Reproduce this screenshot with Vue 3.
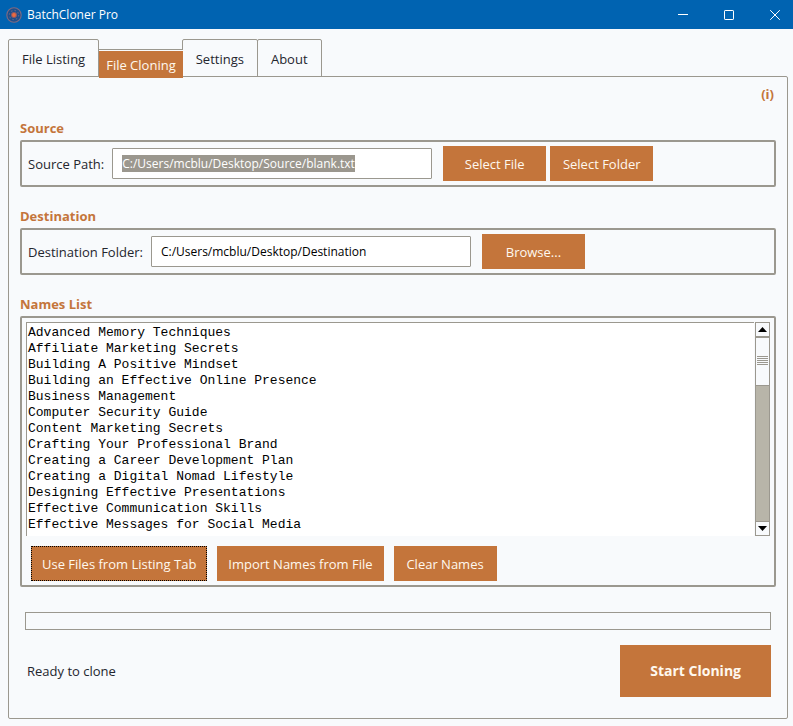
<script setup>
import { ref, onMounted } from 'vue'

const tabs = ['File Listing', 'File Cloning', 'Settings', 'About']
const activeTab = ref('File Cloning')

const sourcePath = ref('C:/Users/mcblu/Desktop/Source/blank.txt')
const destinationPath = ref('C:/Users/mcblu/Desktop/Destination')
const names = ref([
  'Advanced Memory Techniques',
  'Affiliate Marketing Secrets',
  'Building A Positive Mindset',
  'Building an Effective Online Presence',
  'Business Management',
  'Computer Security Guide',
  'Content Marketing Secrets',
  'Crafting Your Professional Brand',
  'Creating a Career Development Plan',
  'Creating a Digital Nomad Lifestyle',
  'Designing Effective Presentations',
  'Effective Communication Skills',
  'Effective Messages for Social Media',
].join('\n'))

const sourceInput = ref(null)
const namesBox = ref(null)

function scrollNames(step) {
  namesBox.value.scrollTop += step
}

onMounted(() => {
  sourceInput.value.focus()
  sourceInput.value.select()
})
</script>

<template>
  <div class="window">
    <header class="titlebar">
      <svg class="logo" viewBox="0 0 16 16" aria-hidden="true">
        <circle cx="8" cy="8" r="7.2" fill="#1d4f8c" stroke="#806a80" stroke-width="1.1" />
        <circle cx="8" cy="8" r="4.6" fill="none" stroke="#5d6288" stroke-width="1.2" stroke-dasharray="1.6 2" />
        <circle cx="8" cy="8" r="3" fill="#8c5a68" />
        <circle cx="8" cy="8" r="1.9" fill="#ee6a3e" />
      </svg>
      <h1 class="title">BatchCloner Pro</h1>
      <button class="winbtn" type="button" aria-label="Minimize">
        <svg viewBox="0 0 10 10"><path d="M0 4.5H10" /></svg>
      </button>
      <button class="winbtn" type="button" aria-label="Maximize">
        <svg viewBox="0 0 10 10"><rect x="0.5" y="0.5" width="9" height="9" rx="0.6" /></svg>
      </button>
      <button class="winbtn" type="button" aria-label="Close">
        <svg viewBox="0 0 10 10"><path d="M0.2 0.2L9.8 9.8M9.8 0.2L0.2 9.8" /></svg>
      </button>
    </header>

    <main class="client">
      <div class="tabs" role="tablist">
        <button
          v-for="tab in tabs"
          :key="tab"
          type="button"
          role="tab"
          class="tab"
          :class="{ active: tab === activeTab }"
          :aria-selected="tab === activeTab"
          @click="activeTab = tab"
        >{{ tab }}</button>
      </div>

      <section class="panel">
        <div class="help"><button class="info" type="button">(i)</button></div>

        <section class="group">
          <h2 class="heading">Source</h2>
          <div class="box row">
            <label for="source">Source Path:</label>
            <input id="source" ref="sourceInput" v-model="sourcePath" type="text" class="field" spellcheck="false" />
            <div class="pair">
              <button class="btn" type="button">Select File</button>
              <button class="btn" type="button">Select Folder</button>
            </div>
          </div>
        </section>

        <section class="group">
          <h2 class="heading">Destination</h2>
          <div class="box row">
            <label for="destination">Destination Folder:</label>
            <input id="destination" v-model="destinationPath" type="text" class="field" spellcheck="false" />
            <button class="btn" type="button">Browse...</button>
          </div>
        </section>

        <section class="group grow">
          <h2 id="names-heading" class="heading">Names List</h2>
          <div class="box names">
            <div class="list">
              <textarea ref="namesBox" v-model="names" class="text" aria-labelledby="names-heading" spellcheck="false" wrap="off"></textarea>
              <div class="scrollbar">
                <button class="arrow" type="button" aria-label="Scroll up" @click="scrollNames(-16)">
                  <svg viewBox="0 0 9 5"><path d="M4.5 0L9 5H0Z" /></svg>
                </button>
                <div class="thumb"><i></i><i></i><i></i><i></i><i></i></div>
                <div class="trough"></div>
                <button class="arrow" type="button" aria-label="Scroll down" @click="scrollNames(16)">
                  <svg viewBox="0 0 9 5"><path d="M0 0H9L4.5 5Z" /></svg>
                </button>
              </div>
            </div>
            <div class="actions">
              <button class="btn current" type="button">Use Files from Listing Tab</button>
              <button class="btn" type="button">Import Names from File</button>
              <button class="btn" type="button">Clear Names</button>
            </div>
          </div>
        </section>

        <progress class="progress" value="0" max="100" aria-label="Cloning progress"></progress>

        <footer class="footer">
          <span>Ready to clone</span>
          <button class="btn start" type="button">Start Cloning</button>
        </footer>
      </section>
    </main>
  </div>
</template>

<style>
body {
  margin: 0;
  background: #f8fafc;
}
</style>

<style scoped>
* {
  box-sizing: border-box;
}

.window {
  display: flex;
  flex-direction: column;
  min-height: 100vh;
  background: #f8fafc;
  color: #24262e;
  font: 13px/18px "Open Sans", "Noto Sans", sans-serif;
}

button,
input {
  font: inherit;
  color: inherit;
  margin: 0;
  border-radius: 0;
}

.titlebar {
  display: flex;
  align-items: center;
  gap: 10px;
  height: 29px;
  padding-left: 6px;
  background: #0063b1;
  color: #fff;
}

.logo {
  width: 16px;
  height: 16px;
  margin-right: -5px;
}

.title {
  flex: 1;
  margin: 0;
  font-size: 12px;
  font-weight: 400;
}

.winbtn {
  display: flex;
  align-items: center;
  justify-content: center;
  width: 36px;
  height: 26px;
  padding: 0;
  border: 0;
  background: none;
}

.winbtn svg {
  width: 10px;
  height: 10px;
  fill: none;
  stroke: #fff;
  stroke-width: 1;
  overflow: visible;
}

.client {
  flex: 1;
  display: flex;
  flex-direction: column;
  padding: 10px 5px 7px 8px;
}

.tabs {
  display: flex;
  align-items: flex-end;
}

.tab {
  height: 38px;
  padding: 2px 13px 0;
  margin: 0 -1px -1px 0;
  border: 1px solid #9b988f;
  border-radius: 2px 2px 0 0;
  background: #f8fafc;
}

.tab.active {
  position: relative;
  height: 29px;
  padding: 3px 7px 0;
  margin: 0 -1px -2px 1px;
  border: 0;
  border-radius: 0;
  background: linear-gradient(#9b988f 1px, #f8fafc 1px, #f8fafc 2px, #c4753b 2px);
  color: #fff8ee;
}

.panel {
  flex: 1;
  display: flex;
  flex-direction: column;
  padding: 8px 11px 21px;
  border: 1px solid #9b988f;
  border-radius: 2px;
}

.help {
  display: flex;
  justify-content: flex-end;
}

.info {
  padding: 0 2px;
  border: 0;
  background: none;
  color: #c4753b;
  font-weight: 700;
}

.group {
  margin-top: 16px;
}

.group + .group {
  margin-top: 20px;
}

.grow {
  flex: 1;
  display: flex;
  flex-direction: column;
}

.heading {
  margin: 0 0 3px;
  color: #c4753b;
  font-size: 13px;
  font-weight: 700;
  line-height: 18px;
}

.box {
  border: 2px solid #9b988f;
  border-radius: 2px;
}

.row {
  display: flex;
  align-items: center;
  gap: 8px;
  padding: 4px 6px;
}

.field {
  width: 320px;
  height: 31px;
  padding: 0 9px;
  margin-right: 3px;
  border: 1px solid #9b988f;
  border-radius: 1px;
  outline: 0;
  background: #fff;
  color: #000;
  font-size: 12px;
}

.field::selection {
  background: #9b978e;
  color: #fff;
}

.pair {
  display: flex;
  gap: 4px;
}

.btn {
  min-width: 103px;
  height: 35px;
  padding: 0 10px;
  border: 1px solid #c4753b;
  background: #c4753b;
  color: #fff8ee;
  white-space: nowrap;
}

.btn.current {
  border: 1px dotted #000;
}

.names {
  flex: 1;
  display: flex;
  flex-direction: column;
  padding: 4px;
}

.list {
  flex: 1;
  display: flex;
  min-height: 214px;
}

.text {
  flex: 1;
  min-width: 0;
  margin: 0;
  padding: 2px 1px 0;
  border: 1px solid #9b988f;
  border-width: 1px 0 0 1px;
  border-radius: 0;
  outline: 0;
  resize: none;
  overflow: hidden;
  background: #fff;
  color: #000;
  font: 13px/16px "Liberation Mono", monospace;
}

.scrollbar {
  display: flex;
  flex-direction: column;
  width: 15px;
  margin-left: 1px;
  border: 1px solid #9b988f;
  background: #b8b5a9;
}

.arrow {
  display: flex;
  align-items: center;
  justify-content: center;
  height: 13px;
  padding: 0;
  border: 0;
  background: #f8fafc;
}

.arrow svg {
  width: 9px;
  height: 5px;
  fill: #000;
}

.thumb {
  display: flex;
  flex-direction: column;
  align-items: stretch;
  justify-content: center;
  gap: 1px;
  height: 50px;
  padding: 0 1px 2px;
  border: 1px solid #9b988f;
  border-width: 2px 0 1px;
  background: #f8fafc;
}

.thumb i {
  height: 1px;
  background: #9b988f;
}

.trough {
  flex: 1;
  border-bottom: 1px solid #9b988f;
}

.actions {
  display: flex;
  flex-wrap: wrap;
  gap: 10px;
  padding: 10px 5px 0;
}

.progress {
  appearance: none;
  display: block;
  width: auto;
  height: 18px;
  margin: 25px 5px 15px;
  border: 1px solid #9b988f;
  background: #f8fafc;
}

.progress::-webkit-progress-bar {
  background: #f8fafc;
}

.progress::-webkit-progress-value {
  background: #c4753b;
}

.footer {
  display: flex;
  align-items: center;
  justify-content: space-between;
  padding: 0 5px 0 7px;
}

.btn.start {
  height: 52px;
  padding: 0 29px;
  font-size: 14px;
  font-weight: 700;
}
</style>
